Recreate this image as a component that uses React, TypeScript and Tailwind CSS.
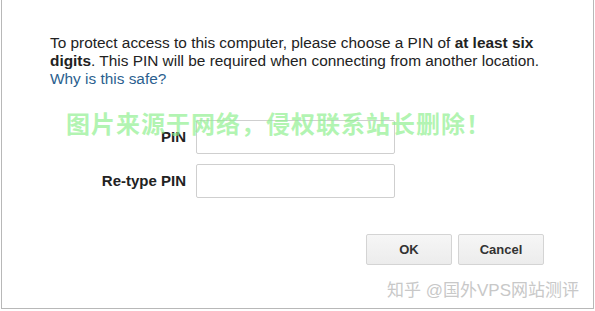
const fields = ["PIN", "Re-type PIN"];

export default function App() {
  return (
    <div
      className="relative h-[311px] w-[595px] overflow-hidden bg-white text-[#222]"
      style={{ fontFamily: '"Liberation Sans", Arial, "Noto Sans CJK SC", sans-serif' }}
    >
      <div className="ml-px h-[309px] w-[593px] border-x border-b border-[#b8b8b8] pl-[48px] pt-[34px]">
        <p className="w-[500px] text-[15.4px] leading-[18px]">
          To protect access to this computer, please choose a PIN of{" "}
          <b>at least six digits</b>. This PIN will be required when connecting
          from another location.
          <br />
          <a href="#" className="text-[#2b5f8f]">
            Why is this safe?
          </a>
        </p>

        <div className="mt-[32px] flex flex-col gap-[10px]">
          {fields.map((label) => (
            <div key={label} className="flex items-center gap-[10px]">
              <label className="w-[136px] text-right text-[15px] font-bold text-[#222]">
                {label}
              </label>
              <input
                type="password"
                className="h-[34px] w-[199px] rounded-[2px] border border-[#cfcfcf] bg-white outline-none"
              />
            </div>
          ))}
        </div>

        <div className="mt-[36px] flex justify-end gap-[6px] pr-[49px]">
          <button className="h-[31px] w-[86px] rounded-[2px] border border-[#d4d4d4] bg-gradient-to-b from-[#f6f6f6] to-[#ececec] text-[13px] font-bold text-[#333]">
            OK
          </button>
          <button className="h-[31px] w-[86px] rounded-[2px] border border-[#d4d4d4] bg-gradient-to-b from-[#f6f6f6] to-[#ececec] text-[13px] font-bold text-[#333]">
            Cancel
          </button>
        </div>
      </div>

      <div className="pointer-events-none absolute left-[66px] top-[107px] whitespace-nowrap text-[24px] font-bold tracking-[1px] text-[#8ff08f]/70">
        图片来源于网络，侵权联系站长删除！
      </div>
      <div className="pointer-events-none absolute left-[387px] top-[278px] whitespace-nowrap text-[17px] text-[#c8c8c8]">
        知乎 @国外VPS网站测评
      </div>
    </div>
  );
}
